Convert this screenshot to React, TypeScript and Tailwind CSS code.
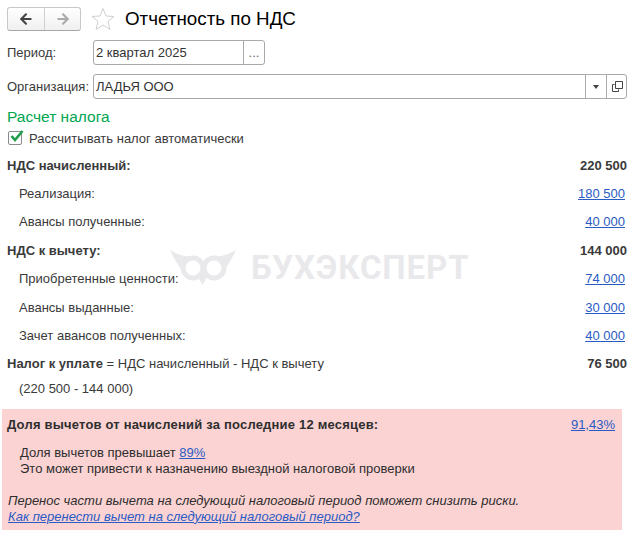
import { ArrowLeft, ArrowRight } from "lucide-react";

type Row = {
  label: string;
  value: string;
  bold?: boolean;
  link?: boolean;
};

const rows: Row[] = [
  { label: "НДС начисленный:", value: "220 500", bold: true },
  { label: "Реализация:", value: "180 500", link: true },
  { label: "Авансы полученные:", value: "40 000", link: true },
  { label: "НДС к вычету:", value: "144 000", bold: true },
  { label: "Приобретенные ценности:", value: "74 000", link: true },
  { label: "Авансы выданные:", value: "30 000", link: true },
  { label: "Зачет авансов полученных:", value: "40 000", link: true },
];

function Watermark() {
  return (
    <div className="absolute left-[169px] top-[249px] flex items-center gap-[14px] text-[#e9e9ec]">
      <svg width="68" height="36" viewBox="0 0 68 36" fill="none">
        <path d="M1 1 Q12 8 24 8 L34 12 L44 8 Q56 8 67 1 Q62 12 56 20 L12 20 Q6 12 1 1 Z" fill="#e9e9ec" />
        <path d="M28 26 L33.5 36 L39 26 Z" fill="#e9e9ec" />
        <circle cx="24" cy="19" r="10" fill="#fff" stroke="#e9e9ec" strokeWidth="5" />
        <circle cx="45" cy="19" r="10" fill="#fff" stroke="#e9e9ec" strokeWidth="5" />
      </svg>
      <span className="text-[33px] leading-none font-bold tracking-[0.9px] font-['Roboto',sans-serif]">БУХЭКСПЕРТ</span>
    </div>
  );
}

export default function App() {
  return (
    <div className="relative w-[638px] h-[533px] bg-white overflow-hidden text-[13px] leading-[15px] text-[#3a3a3a] font-['Liberation_Sans',Arial,sans-serif]">
      <Watermark />

      <div className="flex items-center h-[25px] mt-[6px] ml-[7px]">
        <div className="flex w-[74px] h-[24px] rounded-[3px] border border-[#c8c8c8] border-b-[#a8a8a8] bg-gradient-to-b from-white to-[#f0f0f0]">
          <div className="flex w-[37px] items-center justify-center border-r border-[#cfcfcf]">
            <ArrowLeft size={16} strokeWidth={3.2} className="text-[#444]" />
          </div>
          <div className="flex flex-1 items-center justify-center">
            <ArrowRight size={16} strokeWidth={3.2} className="text-[#ababab]" />
          </div>
        </div>
        <svg width="24" height="24" viewBox="0 0 24 24" className="ml-[10px]" fill="#fff" stroke="#cfcfcf" strokeWidth="1">
          <path d="M12 1.5 L15 9 L23 9.5 L17 14.5 L19 22.5 L12 18 L5 22.5 L7 14.5 L1 9.5 L9 9 Z" />
        </svg>
        <h1 className="ml-[10px] text-[18.8px] leading-[24px] text-black font-normal">Отчетность по НДС</h1>
      </div>

      <div className="flex items-center mt-[9px] ml-[7px] h-[25px]">
        <span className="w-[86px]">Период:</span>
        <div className="flex w-[172px] h-[25px] rounded-[3px] border border-[#a9a9a9]">
          <span className="flex-1 pl-[2px] leading-[23px] text-[#333]">2 квартал 2025</span>
          <span className="w-[21px] border-l border-[#a9a9a9] text-center leading-[23px] text-[#666]">...</span>
        </div>
      </div>

      <div className="flex items-center mt-[9px] ml-[7px] h-[25px]">
        <span className="w-[86px]">Организация:</span>
        <div className="flex w-[534px] h-[25px] rounded-[3px] border border-[#a9a9a9]">
          <span className="flex-1 pl-[2px] leading-[23px] text-[#333]">ЛАДЬЯ ООО</span>
          <span className="flex w-[21px] items-center justify-center border-l border-[#a9a9a9]">
            <span className="border-x-[3px] border-t-[4px] border-x-transparent border-t-[#444]" />
          </span>
          <span className="flex w-[20px] items-center justify-center border-l border-[#a9a9a9]">
            <svg width="12" height="12" viewBox="0 0 12 12" fill="none" stroke="#444">
              <path d="M4.5 0.5 H11.5 V7.5 H4.5 Z" />
              <path d="M3.5 3.5 H1.5 V10.5 H7.5 V8.5" />
            </svg>
          </span>
        </div>
      </div>

      <div className="mt-[9px] ml-[7px] text-[15.5px] leading-[18px] text-[#00a650]">Расчет налога</div>

      <label className="flex items-center mt-[4px] ml-[8px] h-[16px]">
        <span className="relative w-[14px] h-[14px] rounded-[2px] border border-[#8a8a8a] bg-white">
          <svg width="16" height="15" viewBox="0 0 16 15" className="absolute -top-[3px] left-0" fill="none" stroke="#1e9e4a" strokeWidth="2.6">
            <path d="M2.5 7 L6 11 L13.5 2" />
          </svg>
        </span>
        <span className="ml-[7px]">Рассчитывать налог автоматически</span>
      </label>

      <div className="mt-[5px] ml-[7px] w-[620px]">
        {rows.map((row) => (
          <div key={row.label} className="flex items-center justify-between h-[28.4px]">
            <span className={row.bold ? "font-bold" : "pl-[12px]"}>{row.label}</span>
            {row.link ? (
              <a className="pr-[2px] text-[#2a5bc4] underline">{row.value}</a>
            ) : (
              <span className="font-bold">{row.value}</span>
            )}
          </div>
        ))}
        <div className="flex items-center justify-between h-[28.4px]">
          <span>
            <b>Налог к уплате</b> = НДС начисленный - НДС к вычету
          </span>
          <span className="font-bold">76 500</span>
        </div>
        <div className="pl-[12px] pt-[1.8px] leading-[18px]">(220 500 - 144 000)</div>
      </div>

      <div className="mt-[11px] ml-[2px] w-[620px] h-[121px] bg-[#fbd3d3] pl-[5px] pr-[7px] pt-[8px] text-[#2e2e2e]">
        <div className="flex justify-between">
          <b className="tracking-[0.2px]">Доля вычетов от начислений за последние 12 месяцев:</b>
          <a className="text-[#2a5bc4] underline">91,43%</a>
        </div>
        <div className="mt-[13px] pl-[13px] leading-[16px]">
          <div>
            Доля вычетов превышает <a className="text-[#2a5bc4] underline">89%</a>
          </div>
          <div>Это может привести к назначению выездной налоговой проверки</div>
        </div>
        <div className="mt-[16px] pl-[1px] italic leading-[16px]">
          <div>Перенос части вычета на следующий налоговый период поможет снизить риски.</div>
          <a className="text-[#2a5bc4] underline">Как перенести вычет на следующий налоговый период?</a>
        </div>
      </div>
    </div>
  );
}
